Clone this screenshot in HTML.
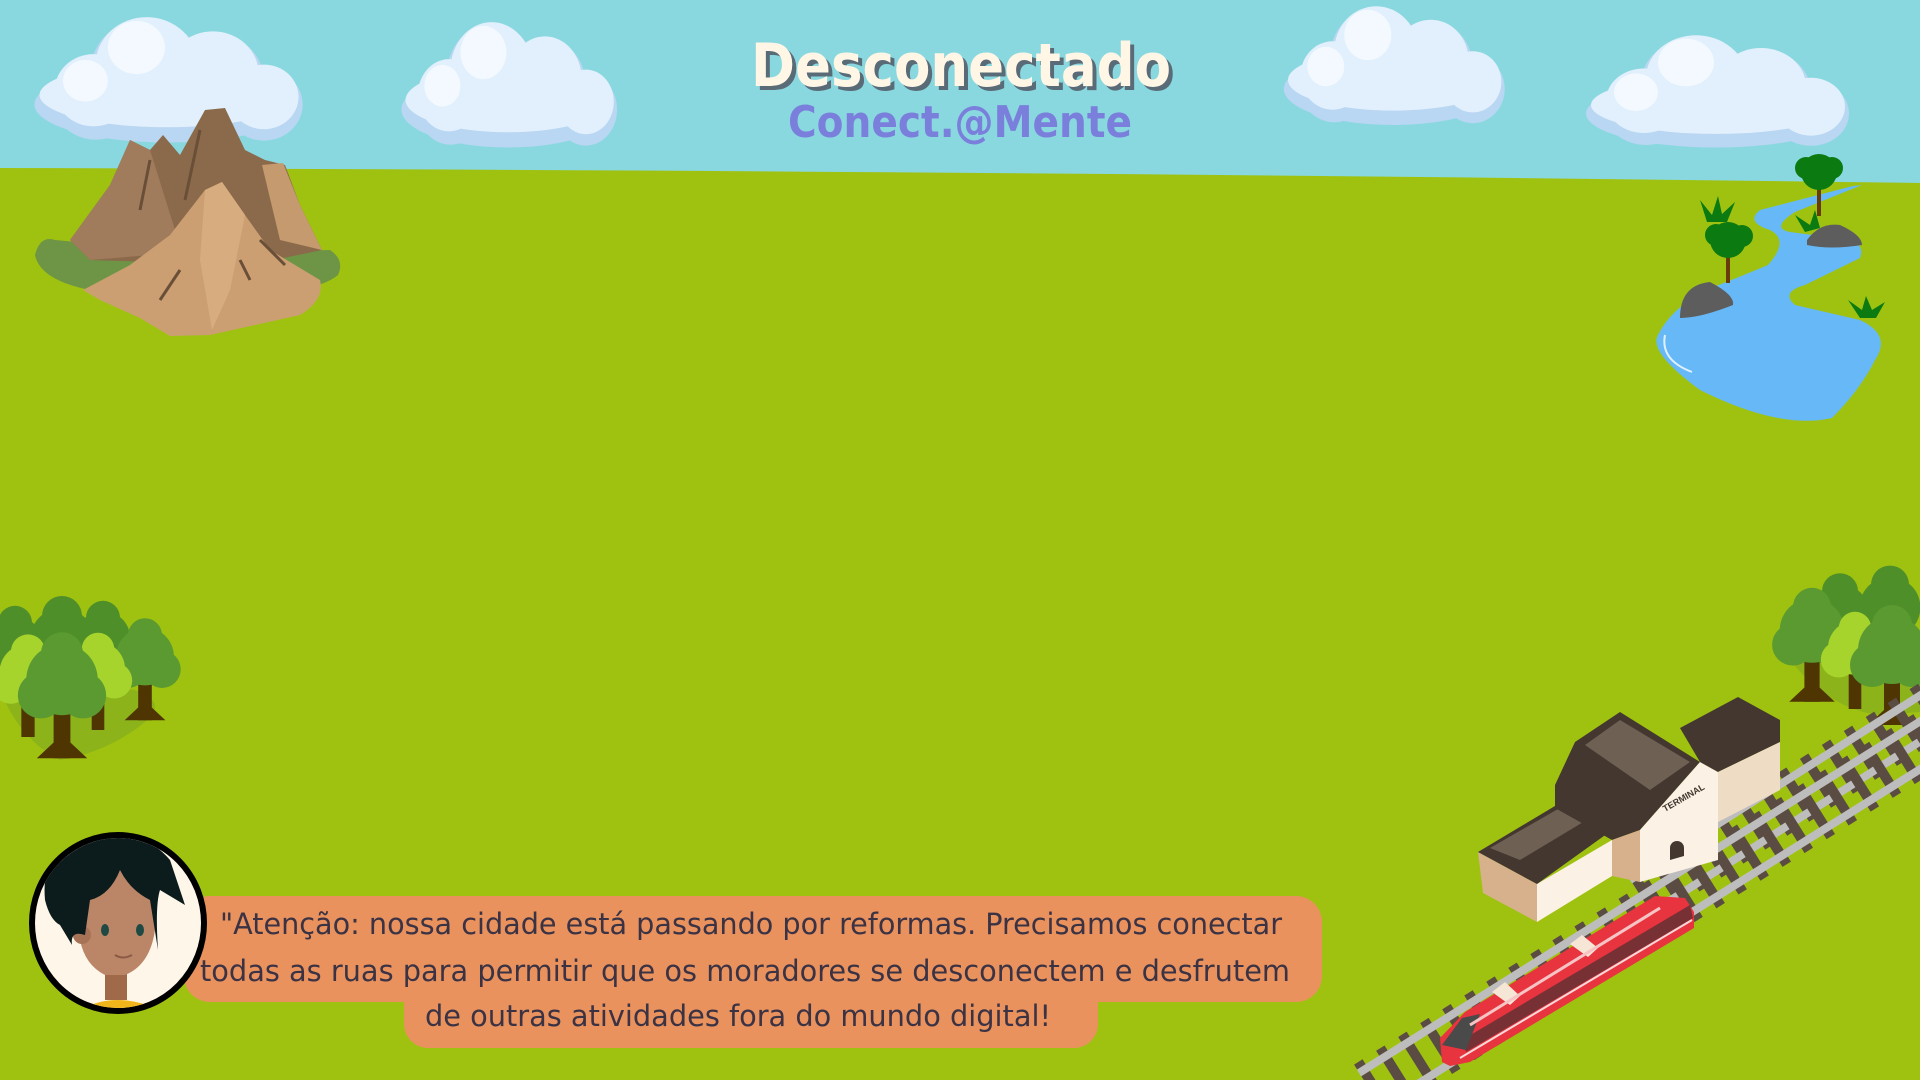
<!DOCTYPE html>
<html><head><meta charset="utf-8"><style>
html,body{margin:0;padding:0;width:1920px;height:1080px;overflow:hidden;background:#9fc211}
svg{display:block}
</style></head><body>
<svg width="1920" height="1080" viewBox="0 0 1920 1080" xmlns="http://www.w3.org/2000/svg">
<defs>
<g id="cloud">
 <ellipse cx="0" cy="10" rx="130" ry="40" fill="#b9d6f2"/>
 <circle cx="-70" cy="5" r="42" fill="#b9d6f2"/>
 <circle cx="-20" cy="-25" r="55" fill="#b9d6f2"/>
 <circle cx="45" cy="-15" r="50" fill="#b9d6f2"/>
 <circle cx="95" cy="10" r="38" fill="#b9d6f2"/>
 <ellipse cx="0" cy="0" rx="125" ry="34" fill="#e1f0fc"/>
 <circle cx="-72" cy="-5" r="38" fill="#e1f0fc"/>
 <circle cx="-20" cy="-32" r="50" fill="#e1f0fc"/>
 <circle cx="45" cy="-22" r="45" fill="#e1f0fc"/>
 <circle cx="95" cy="2" r="34" fill="#e1f0fc"/>
 <circle cx="-30" cy="-50" r="28" fill="#f3f9ff"/>
 <circle cx="-80" cy="-15" r="22" fill="#f3f9ff"/>
</g>
<g id="tree">
 <rect x="-8" y="10" width="16" height="55" fill="#4e3502"/>
 <path d="M-24 65 L-8 50 L8 50 L24 65 Z" fill="#4e3502"/>
 <circle cx="0" cy="-10" r="34" fill="#5a9a30"/>
 <circle cx="-20" cy="5" r="22" fill="#5a9a30"/>
 <circle cx="20" cy="5" r="22" fill="#5a9a30"/>
 <circle cx="0" cy="-35" r="20" fill="#5a9a30"/>
</g>
<g id="treeL">
 <rect x="-7" y="10" width="14" height="50" fill="#4e3502"/>
 <circle cx="0" cy="-8" r="30" fill="#a6d42c"/>
 <circle cx="-18" cy="5" r="20" fill="#a6d42c"/>
 <circle cx="18" cy="5" r="20" fill="#a6d42c"/>
 <circle cx="0" cy="-30" r="18" fill="#a6d42c"/>
</g>
<g id="treeD">
 <rect x="-7" y="10" width="14" height="45" fill="#4e3502"/>
 <circle cx="0" cy="-8" r="32" fill="#4f8f2a"/>
 <circle cx="0" cy="-32" r="20" fill="#4f8f2a"/>
</g>
</defs>

<rect width="1920" height="1080" fill="#9fc211"/>
<path d="M0,0 H1920 V183 Q960,170 0,168 Z" fill="#8ad8df"/>

<use href="#cloud" transform="translate(167,95) scale(1.02,0.95)"/>
<use href="#cloud" transform="translate(508,100) scale(0.82,0.95)"/>
<use href="#cloud" transform="translate(1393,80) scale(0.84,0.9)"/>
<use href="#cloud" transform="translate(1716,105) scale(1.0,0.85)"/>

<g>
 <path d="M35,255 Q40,235 55,240 L110,245 Q140,240 160,255 L330,250 Q345,260 338,275 Q320,290 270,292 L90,290 Q40,280 35,255Z" fill="#6e9445"/>
 <path d="M70,240 L110,185 L130,140 L150,150 L163,135 L180,155 L205,110 L225,108 L245,150 L265,160 L285,165 L300,205 L322,250 L250,265 L90,260Z" fill="#8b6a4b"/>
 <path d="M70,240 L110,185 L130,140 L150,150 L175,230 L150,255 L90,260Z" fill="#a17c5c"/>
 <path d="M262,165 L283,163 L300,205 L322,250 L280,240Z" fill="#c49a6e"/>
 <path d="M83,290 L130,265 L170,235 L205,190 L222,182 L245,215 L270,250 L320,280 Q325,300 300,315 L255,325 L210,335 L170,336 L140,318 L100,300Z" fill="#cb9f72"/>
 <path d="M205,190 L222,182 L245,215 L230,290 L212,330 L200,260Z" fill="#d7ad80"/>
 <path d="M150,160 L140,210 M200,130 L185,200 M240,260 L250,280 M180,270 L160,300 M260,240 L285,265" stroke="#6a4f38" stroke-width="3" fill="none"/>
</g>

<g>
 <path d="M1853,186 L1760,210 Q1745,222 1770,230 Q1790,240 1768,265 Q1720,285 1705,290 Q1670,310 1658,335 Q1648,352 1700,390 Q1780,430 1832,418 Q1860,390 1875,360 Q1892,335 1860,320 L1795,305 Q1780,292 1805,285 L1860,258 Q1865,245 1850,240 L1790,232 Q1770,228 1795,212 L1862,185Z" fill="#67b8f6"/>
 <path d="M1665,335 Q1660,360 1692,372" stroke="#dff0ff" stroke-width="2" fill="none"/>
 <path d="M1680,318 Q1680,285 1710,282 Q1735,295 1733,305 Q1700,318 1680,318Z" fill="#5d5d5d"/>
 <path d="M1807,240 Q1820,222 1840,225 Q1862,235 1862,245 Q1830,250 1807,245Z" fill="#5d5d5d"/>
 <rect x="1726" y="248" width="4" height="35" fill="#6b3a09"/>
 <circle cx="1728" cy="240" r="18" fill="#0b7a10"/><circle cx="1716" cy="235" r="11" fill="#0b7a10"/><circle cx="1742" cy="236" r="11" fill="#0b7a10"/>
 <rect x="1817" y="182" width="4" height="34" fill="#6b3a09"/>
 <circle cx="1819" cy="172" r="18" fill="#0b7a10"/><circle cx="1806" cy="168" r="11" fill="#0b7a10"/><circle cx="1832" cy="168" r="11" fill="#0b7a10"/>
 <path d="M1707,222 L1700,200 L1712,215 L1718,196 L1722,214 L1735,202 L1727,222Z" fill="#0b7a10"/>
 <path d="M1805,232 L1795,215 L1810,225 L1815,210 L1820,228Z" fill="#0b7a10"/>
 <path d="M1860,318 L1848,300 L1862,310 L1866,296 L1872,310 L1885,302 L1876,318Z" fill="#0b7a10"/>
</g>

<g>
 <path d="M0,690 Q20,740 60,760 Q110,752 150,718 Q165,700 135,690 L0,670Z" fill="#8db31a"/>
 <use href="#treeD" transform="translate(15,650) scale(0.85)"/>
 <use href="#treeD" transform="translate(62,648)"/>
 <use href="#treeD" transform="translate(103,645) scale(0.85)"/>
 <use href="#tree" transform="translate(145,665) scale(0.85)"/>
 <use href="#treeL" transform="translate(28,680) scale(0.95)"/>
 <use href="#treeL" transform="translate(98,676) scale(0.9)"/>
 <use href="#tree" transform="translate(62,690) scale(1.05)"/>
</g>

<g>
 <path d="M1790,660 Q1830,710 1880,715 L1920,712 L1920,640 Z" fill="#8db31a"/>
 <use href="#treeD" transform="translate(1840,620) scale(0.9)"/>
 <use href="#treeD" transform="translate(1890,615) scale(0.95)"/>
 <use href="#tree" transform="translate(1812,640) scale(0.95)"/>
 <use href="#treeL" transform="translate(1855,655) scale(0.9)"/>
 <use href="#tree" transform="translate(1892,660) scale(1.0)"/>
</g>

<!-- tracks -->
<g>
 <line x1="1640" y1="895" x2="1970" y2="685" stroke="#5b4c43" stroke-width="58" stroke-dasharray="10 16"/>
 <line x1="1630" y1="880" x2="1960" y2="670" stroke="#bdbdbd" stroke-width="8"/>
 <line x1="1652" y1="912" x2="1982" y2="702" stroke="#bdbdbd" stroke-width="8"/>
 <line x1="1370" y1="1090" x2="1970" y2="714" stroke="#5b4c43" stroke-width="60" stroke-dasharray="10 16"/>
 <line x1="1359" y1="1073" x2="1959" y2="697" stroke="#bdbdbd" stroke-width="8"/>
 <line x1="1381" y1="1107" x2="1981" y2="731" stroke="#bdbdbd" stroke-width="8"/>
</g>

<!-- station -->
<g>
 <path d="M1478,852 L1537,884 L1537,922 L1483,893Z" fill="#d6b18b"/>
 <path d="M1537,884 L1612,840 L1612,876 L1537,922Z" fill="#fbf1e4"/>
 <path d="M1478,852 L1565,800 L1615,828 L1537,884Z" fill="#43372f"/>
 <path d="M1490,848 L1565,805 L1590,818 L1520,860Z" fill="#6f6054"/>
 <path d="M1555,785 L1575,742 L1620,712 L1700,762 L1640,830 L1612,840 L1555,808Z" fill="#43372f"/>
 <path d="M1585,745 L1620,720 L1690,762 L1650,790Z" fill="#6f6054"/>
 <path d="M1640,830 L1700,762 L1718,772 L1718,860 L1640,882Z" fill="#fbf1e4"/>
 <path d="M1612,840 L1640,830 L1640,882 L1612,876Z" fill="#d6b18b"/>
 <path d="M1680,728 L1738,697 L1780,720 L1780,742 L1718,772 L1700,762Z" fill="#43372f"/>
 <path d="M1718,772 L1780,742 L1780,790 L1718,822Z" fill="#efdcc5"/>
 <text x="1665" y="812" font-family="Liberation Sans" font-size="9" font-weight="bold" fill="#43372f" transform="rotate(-30 1665 812)">TERMINAL</text>
 <path d="M1670,860 v-12 a7,7 0 0 1 14,0 v8Z" fill="#43372f"/>
</g>

<!-- train -->
<g>
 <path d="M1442,1062 L1440,1038 L1465,1012 L1655,896 L1685,898 L1694,912 L1694,928 L1470,1062 L1450,1066Z" fill="#e8343f"/>
 <path d="M1462,1040 L1690,905 L1693,918 L1466,1052Z" fill="#3a2f2f" opacity="0.65"/>
 <path d="M1442,1045 L1462,1018 L1480,1014 L1466,1050Z" fill="#4a4a4a"/>
 <path d="M1492,992 L1505,982 L1520,996 L1510,1005Z" fill="#f5e6d6"/>
 <path d="M1570,944 L1582,935 L1598,948 L1588,957Z" fill="#f5e6d6"/>
 <path d="M1470,1025 L1660,908" stroke="#f6c4c4" stroke-width="3"/>
 <path d="M1460,1058 L1692,920" stroke="#f5d8d8" stroke-width="2"/>
</g>

<g fill="#e9925e">
 <rect x="184" y="896" width="1138" height="106" rx="26"/>
 <rect x="404" y="960" width="694" height="88" rx="24"/>
</g>
<g font-family="'DejaVu Sans Condensed','Liberation Sans Narrow','Liberation Sans',sans-serif" font-size="29" fill="#3b3344">
 <text x="220" y="934" textLength="1062" lengthAdjust="spacingAndGlyphs">"Atenção: nossa cidade está passando por reformas. Precisamos conectar</text>
 <text x="200" y="981" textLength="1090" lengthAdjust="spacingAndGlyphs">todas as ruas para permitir que os moradores se desconectem e desfrutem</text>
 <text x="425" y="1026" textLength="626" lengthAdjust="spacingAndGlyphs">de outras atividades fora do mundo digital!</text>
</g>

<g>
 <ellipse cx="118" cy="923" rx="86" ry="88" fill="#fff6ea" stroke="#000" stroke-width="6"/>
 <clipPath id="av"><ellipse cx="118" cy="923" rx="83" ry="85"/></clipPath>
 <g clip-path="url(#av)">
  <path d="M80,1010 Q115,990 160,1010 L160,1020 L70,1020Z" fill="#f1b51c"/>
  <rect x="105" y="960" width="22" height="40" fill="#a06a4a"/>
  <path d="M78,890 Q78,870 100,865 L150,865 Q160,880 155,930 Q150,965 125,975 L105,975 Q85,965 80,940Z" fill="#bb8667"/>
  <circle cx="82" cy="935" r="9" fill="#a67357"/>
  <path d="M45,900 Q40,845 90,835 Q140,825 170,860 Q180,890 185,905 L160,890 Q155,905 158,950 L150,900 Q130,890 120,870 Q110,895 90,900 L85,935 Q70,930 72,945 L60,925 Q50,920 45,900Z" fill="#0c1b1b"/>
  <ellipse cx="105" cy="930" rx="4" ry="6" fill="#1f4a44"/>
  <ellipse cx="140" cy="930" rx="4" ry="6" fill="#1f4a44"/>
  <path d="M115,955 Q123,960 132,955" stroke="#8a5a44" stroke-width="2" fill="none"/>
 </g>
</g>

<g font-family="'DejaVu Sans','Liberation Sans',sans-serif" font-weight="bold" text-anchor="middle">
 <text x="965" y="90" font-size="60" fill="#5a6b78" textLength="420" lengthAdjust="spacingAndGlyphs">Desconectado</text>
 <text x="961" y="86" font-size="60" fill="#fff6e6" textLength="420" lengthAdjust="spacingAndGlyphs">Desconectado</text>
 <text x="960" y="137" font-size="44" fill="#7b7fdc" textLength="344" lengthAdjust="spacingAndGlyphs">Conect.@Mente</text>
</g>
</svg>
</body></html>
